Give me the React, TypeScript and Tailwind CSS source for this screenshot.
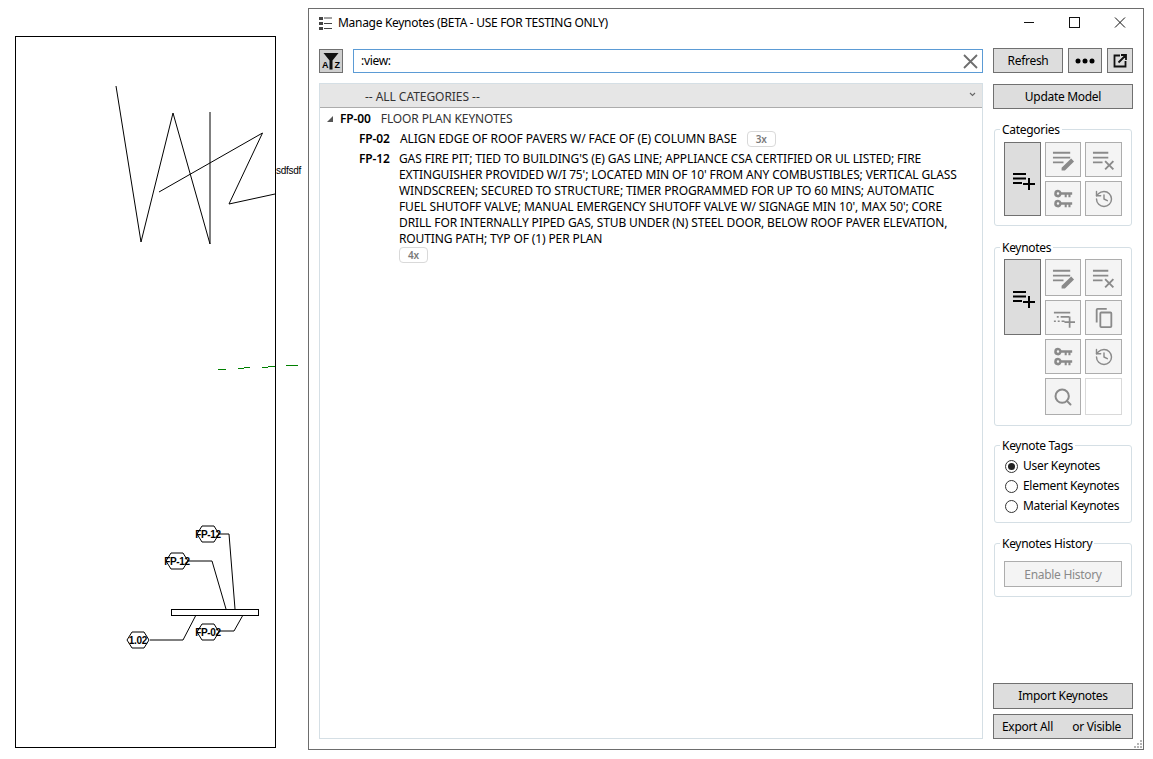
import { History, Search } from "lucide-react";
import type { ReactNode } from "react";

const noteLines = [
  "GAS FIRE PIT; TIED TO BUILDING'S (E) GAS LINE; APPLIANCE CSA CERTIFIED OR UL LISTED; FIRE",
  "EXTINGUISHER PROVIDED W/I 75'; LOCATED MIN OF 10' FROM ANY COMBUSTIBLES; VERTICAL GLASS",
  "WINDSCREEN; SECURED TO STRUCTURE; TIMER PROGRAMMED FOR UP TO 60 MINS; AUTOMATIC",
  "FUEL SHUTOFF VALVE; MANUAL EMERGENCY SHUTOFF VALVE W/ SIGNAGE MIN 10', MAX 50'; CORE",
  "DRILL FOR INTERNALLY PIPED GAS, STUB UNDER (N) STEEL DOOR, BELOW ROOF PAVER ELEVATION,",
  "ROUTING PATH; TYP OF (1) PER PLAN",
];

// tags on the drawing: centre x, centre y, label
const tags: [number, number, string][] = [
  [208, 534, "FP-12"],
  [177, 561, "FP-12"],
  [138, 640, "1.02"],
  [208, 632, "FP-02"],
];

const Drawing = () => (
  <svg width="308" height="759" className="shrink-0" shapeRendering="crispEdges">
    <rect x="15.5" y="36.5" width="260" height="711" fill="none" stroke="#000" />
    <g fill="none" stroke="#000" shapeRendering="auto">
      <polyline points="116,86 141,242 173,113 210,244 210,112" />
      <polyline points="159,192 262.500,133 229,204 275,194" />
      <polyline points="219,534 229,534 235,609" />
      <polyline points="188,561 212,561 226,609" />
      <polyline points="150,640 183,640 196,615" />
      <polyline points="219,631 234,631 243,615" />
    </g>
    <rect x="171.5" y="609.5" width="87" height="6" fill="#fff" stroke="#000" />
    <g stroke="#008000" strokeWidth="1">
      <line x1="218" y1="369.5" x2="226" y2="369.5" />
      <line x1="238" y1="368.5" x2="244" y2="368.5" />
      <line x1="244" y1="367.5" x2="250" y2="367.5" />
      <line x1="262" y1="367.5" x2="268" y2="367.5" />
      <line x1="268" y1="366.5" x2="275" y2="366.5" />
      <line x1="286" y1="365.5" x2="298" y2="365.5" />
    </g>
    <text x="276" y="174" fontSize="10" fontFamily="Liberation Sans, sans-serif" fill="#000" shapeRendering="auto">
      sdfsdf
    </text>
    {tags.map(([cx, cy, label]) => (
      <g key={label + cx}>
        <polygon
          points={`${cx - 11},${cy} ${cx - 6},${cy - 8} ${cx + 6},${cy - 8} ${cx + 11},${cy} ${cx + 6},${cy + 8} ${cx - 6},${cy + 8}`}
          fill="#fff"
          stroke="#000"
          shapeRendering="auto"
        />
        <text
          x={cx}
          y={cy + 4}
          textAnchor="middle"
          fontSize="10"
          fontWeight="700"
          fontFamily="Liberation Sans, sans-serif"
          fill="#000"
        >
          {label}
        </text>
      </g>
    ))}
  </svg>
);

const Glyph = ({ children, size = 20 }: { children: ReactNode; size?: number }) => (
  <svg width={size} height={size} viewBox="0 0 24 24" fill="currentColor">
    {children}
  </svg>
);

const ListAddIcon = () => (
  <Glyph size={24}>
    <path d="M2 6h13v2H2zM2 10.500h13v2H2zM2 15h9v2H2zM17 11h2v5h5v2h-5v5h-2v-5h-5v-2h5z" />
  </Glyph>
);
const ListEditIcon = () => (
  <Glyph size={23}>
    <path d="M1 4h18v2H1zM1 9h18v2H1zM1 14h11v2H1zM20 11l3 3-9.500 9.500H10v-3z" />
  </Glyph>
);
const ListRemoveIcon = () => (
  <Glyph size={23}>
    <path d="M1 4h16v2H1zM1 9h16v2H1zM1 14h10v2H1zM14.400 13l3.600 3.600 3.600-3.600 1.400 1.400-3.600 3.600 3.600 3.600-1.400 1.400-3.600-3.600-3.600 3.600-1.400-1.400 3.600-3.600-3.600-3.600z" />
  </Glyph>
);
const ListDashAddIcon = () => (
  <Glyph size={23}>
    <path d="M2 6h17v1.800H2zM5 10.500h2v1.800H5zM9 10.500h9v1.800H9zM2 15h2v1.800H2zM6 15h2v1.800H6zM10 15h3v1.800h-3zM17.500 11h1.800v5h4.700v1.800h-4.700v5h-1.800v-5h-4.500V16h4.500z" />
  </Glyph>
);
const KeysIcon = () => (
  <Glyph size={20}>
    <path
      fillRule="evenodd"
      d="M6 1a4.500 4.500 0 0 1 4.200 3H23v3h-2v3h-2.500V7h-2v3H14V7h-3.800A4.500 4.500 0 1 1 6 1zm0 3a1.500 1.500 0 1 0 0 3 1.500 1.500 0 0 0 0-3zM6 13a4.500 4.500 0 0 1 4.200 3H23v3h-2v3h-2.500v-3h-2v3H14v-3h-3.800A4.500 4.500 0 1 1 6 13zm0 3a1.500 1.500 0 1 0 0 3 1.500 1.500 0 0 0 0-3z"
    />
  </Glyph>
);
const CopyIcon = () => (
  <Glyph size={22}>
    <path d="M15 1H5a2 2 0 0 0-2 2v14h2V3h10zm4 4H9a2 2 0 0 0-2 2v14a2 2 0 0 0 2 2h10a2 2 0 0 0 2-2V7a2 2 0 0 0-2-2zm0 16H9V7h10z" />
  </Glyph>
);

type ButtonTone = "strong" | "soft" | "blank";

const toneClass: Record<ButtonTone, string> = {
  strong: "bg-[#dddddd] border-[#707070] text-black",
  soft: "bg-[#f4f4f4] border-[#adadad] text-[#8a8a8a]",
  blank: "bg-white border-[#d9d9d9]",
};

const IconButton = ({
  children,
  tone = "soft",
  className = "",
}: {
  children?: ReactNode;
  tone?: ButtonTone;
  className?: string;
}) => (
  <div className={`flex items-center justify-center border ${toneClass[tone]} ${className}`}>{children}</div>
);

const TextButton = ({ children, className = "" }: { children: ReactNode; className?: string }) => (
  <div className={`flex items-center justify-center border border-[#707070] bg-[#dddddd] text-black ${className}`}>
    {children}
  </div>
);

const Group = ({ title, children, className = "" }: { title: string; children: ReactNode; className?: string }) => (
  <fieldset className={`mx-px rounded-[3px] border border-[#d5dfe5] ${className}`}>
    <legend className="ml-[5px] px-[2px] pt-px text-[12px] leading-[15px] text-black">{title}</legend>
    {children}
  </fieldset>
);

const Radio = ({ label, checked = false }: { label: string; checked?: boolean }) => (
  <div className="flex h-[20px] items-center gap-[5px]">
    <span className="flex h-[13px] w-[13px] items-center justify-center rounded-full border border-[#333333] bg-white">
      {checked && <span className="h-[7px] w-[7px] rounded-full bg-[#222222]" />}
    </span>
    <span>{label}</span>
  </div>
);

const Count = ({ value, className = "" }: { value: string; className?: string }) => (
  <span
    className={`flex h-[16px] w-[29px] items-center justify-center rounded-[4px] border border-[#d9d9d9] text-[10px] font-semibold text-[#7a7a7a] ${className}`}
  >
    {value}
  </span>
);

const App = () => {
  return (
    <div className="flex h-[759px] w-[1153px] overflow-hidden bg-white font-['Noto_Sans',sans-serif] text-[12px] tracking-[-0.3px] text-black">
      <Drawing />

      <div className="mt-2 flex h-[742px] w-[836px] shrink-0 flex-col border border-[#6d6d6d] bg-white">
        {/* title bar */}
        <div className="flex h-[28px] shrink-0 items-center pl-[9px]">
          <svg width="15" height="15" viewBox="0 0 15 15" className="mr-[5px]">
            <path d="M1 1h4v3H1zM1 6h4v3H1zM1 11h4v3H1z" fill="#444" />
            <path d="M6 2h8M6 7.500h8M6 12.500h8" stroke="#444" strokeWidth="1" fill="none" />
          </svg>
          <span>Manage Keynotes (BETA - USE FOR TESTING ONLY)</span>
          <div className="ml-auto flex h-full items-center text-[#111111]">
            <svg width="46" height="28" viewBox="0 0 46 28">
              <path d="M19 13.500h10" stroke="#111" fill="none" />
            </svg>
            <svg width="46" height="28" viewBox="0 0 46 28">
              <rect x="18.500" y="8.500" width="10" height="10" stroke="#111" fill="none" />
            </svg>
            <svg width="46" height="28" viewBox="0 0 46 28">
              <path d="M18 8.500l10 10M28 8.500l-10 10" stroke="#111" fill="none" />
            </svg>
          </div>
        </div>

        <div className="flex min-h-0 flex-1 gap-[10px] pt-[11px] pr-[10px] pb-[10px] pl-[10px]">
          {/* left column */}
          <div className="flex w-[664px] flex-col">
            <div className="mt-px flex h-[24px] shrink-0 gap-[10px]">
              <div className="relative h-[24px] w-[24px] shrink-0 border border-[#707070] bg-[#cfcfcf]">
                <svg width="22" height="22" viewBox="0 0 22 22" className="absolute top-0 left-0">
                  <path d="M3.500 3h15l-6 7.500v9h-3v-9z" fill="#111" />
                </svg>
                <span className="absolute bottom-[2px] left-[2px] font-['Liberation_Sans',sans-serif] text-[9px] leading-[9px] font-bold tracking-normal">
                  A
                </span>
                <span className="absolute right-[2px] bottom-[2px] font-['Liberation_Sans',sans-serif] text-[9px] leading-[9px] font-bold tracking-normal">
                  Z
                </span>
              </div>
              <div className="flex min-w-0 flex-1 items-center border border-[#5b9bd5] pr-[3px] pl-[7px]">
                <span>:view:</span>
                <svg width="18" height="18" viewBox="0 0 18 18" className="ml-auto">
                  <path d="M3 3l13 13M16 3L3 16" stroke="#6e6e6e" strokeWidth="1.800" fill="none" />
                </svg>
              </div>
            </div>

            <div className="mt-[10px] flex min-h-0 flex-1 flex-col border border-[#d5dfe5]">
              <div className="flex h-[24px] shrink-0 items-center border-b border-[#acacac] bg-[#e6e6e6] pt-[2px] pl-[45px] tracking-[-0.05px] text-[#333333]">
                <span>-- ALL CATEGORIES --</span>
                <svg width="7" height="5" viewBox="0 0 7 5" className="mr-[6px] mb-[4px] ml-auto">
                  <path d="M1 1l2.500 2.500L6 1" stroke="#666" strokeWidth="1.100" fill="none" />
                </svg>
              </div>

              <div className="flex-1 pt-[2px] tracking-[-0.12px]">
                <div className="flex h-[17px] items-center">
                  <svg width="8" height="8" viewBox="0 0 8 8" className="mr-[6px] ml-[6px]">
                    <path d="M7 1v6H1z" fill="#555" />
                  </svg>
                  <span className="font-semibold">FP-00</span>
                  <span className="ml-[10px] text-[#333333]">FLOOR PLAN KEYNOTES</span>
                </div>
                <div className="mt-[3px] flex h-[18px] items-center pl-[39px]">
                  <span className="w-[41px] font-semibold">FP-02</span>
                  <span className="tracking-[-0.08px]">ALIGN EDGE OF ROOF PAVERS W/ FACE OF (E) COLUMN BASE</span>
                  <Count value="3x" className="ml-[10px]" />
                </div>
                <div className="mt-[3px] flex pl-[39px]">
                  <span className="w-[40px] leading-[16px] font-semibold">FP-12</span>
                  <div className="leading-[16px]">
                    {noteLines.map((line) => (
                      <div key={line} className="whitespace-nowrap">
                        {line}
                      </div>
                    ))}
                    <Count value="4x" />
                  </div>
                </div>
              </div>
            </div>
          </div>

          {/* right column */}
          <div className="relative flex w-[140px] shrink-0 flex-col">
            <div className="flex h-[25px] shrink-0 gap-[5px]">
              <TextButton className="w-[70px]">Refresh</TextButton>
              <TextButton className="w-[34px]">
                <svg width="20" height="6" viewBox="0 0 20 6">
                  <circle cx="3" cy="3" r="2.500" />
                  <circle cx="10" cy="3" r="2.500" />
                  <circle cx="17" cy="3" r="2.500" />
                </svg>
              </TextButton>
              <TextButton className="w-[26px]">
                <svg width="14" height="14" viewBox="0 0 14 14" fill="none" stroke="#111" strokeWidth="1.800">
                  <path d="M7 1.500H1.500v11h11V7M5.500 8.500L12.500 1.500M8 1h5v5" />
                </svg>
              </TextButton>
            </div>
            <TextButton className="mt-[11px] h-[25px] shrink-0">Update Model</TextButton>

            <Group title="Categories" className="mt-[12px] h-[105px]">
              <div className="grid grid-cols-[37px_36px_37px] grid-rows-[35px_35px] gap-[4px] pt-[5px] pl-[9px]">
                <IconButton tone="strong" className="row-span-2">
                  <ListAddIcon />
                </IconButton>
                <IconButton>
                  <ListEditIcon />
                </IconButton>
                <IconButton>
                  <ListRemoveIcon />
                </IconButton>
                <IconButton>
                  <KeysIcon />
                </IconButton>
                <IconButton>
                  <History size={20} strokeWidth={1.7} />
                </IconButton>
              </div>
            </Group>

            <Group title="Keynotes" className="mt-[13px] h-[187px]">
              <div className="grid grid-cols-[37px_36px_37px] grid-rows-[37px_35px_35px_37px] gap-[4px] pt-[4px] pl-[9px]">
                <IconButton tone="strong" className="row-span-2">
                  <ListAddIcon />
                </IconButton>
                <IconButton>
                  <ListEditIcon />
                </IconButton>
                <IconButton>
                  <ListRemoveIcon />
                </IconButton>
                <IconButton>
                  <ListDashAddIcon />
                </IconButton>
                <IconButton>
                  <CopyIcon />
                </IconButton>
                <div className="row-span-2" />
                <IconButton>
                  <KeysIcon />
                </IconButton>
                <IconButton>
                  <History size={20} strokeWidth={1.7} />
                </IconButton>
                <IconButton>
                  <Search size={20} strokeWidth={2.4} />
                </IconButton>
                <IconButton tone="blank" />
              </div>
            </Group>

            <Group title="Keynote Tags" className="mt-[11px] h-[86px]">
              <div className="pt-[3px] pl-[10px]">
                <Radio label="User Keynotes" checked />
                <Radio label="Element Keynotes" />
                <Radio label="Material Keynotes" />
              </div>
            </Group>

            <Group title="Keynotes History" className="mt-[12px] h-[62px]">
              <div className="mx-[9px] mt-[10px] flex h-[26px] items-center justify-center border border-[#adadad] bg-[#f4f4f4] pt-px text-[#8a8a8a]">
                Enable History
              </div>
            </Group>

            <div className="mt-auto flex flex-col gap-[5px]">
              <TextButton className="h-[26px]">Import Keynotes</TextButton>
              <div className="flex h-[25px] items-center justify-between border border-[#707070] bg-[#dddddd] pr-[11px] pl-[8px]">
                <span>Export All</span>
                <span>or Visible</span>
              </div>
            </div>

            <svg width="10" height="10" viewBox="0 0 10 10" className="absolute -right-[10px] -bottom-[10px]" fill="#b5b5b5">
              <rect x="7" y="1" width="2" height="2" />
              <rect x="4" y="4" width="2" height="2" />
              <rect x="7" y="4" width="2" height="2" />
              <rect x="1" y="7" width="2" height="2" />
              <rect x="4" y="7" width="2" height="2" />
              <rect x="7" y="7" width="2" height="2" />
            </svg>
          </div>
        </div>
      </div>
    </div>
  );
};

export default App;
